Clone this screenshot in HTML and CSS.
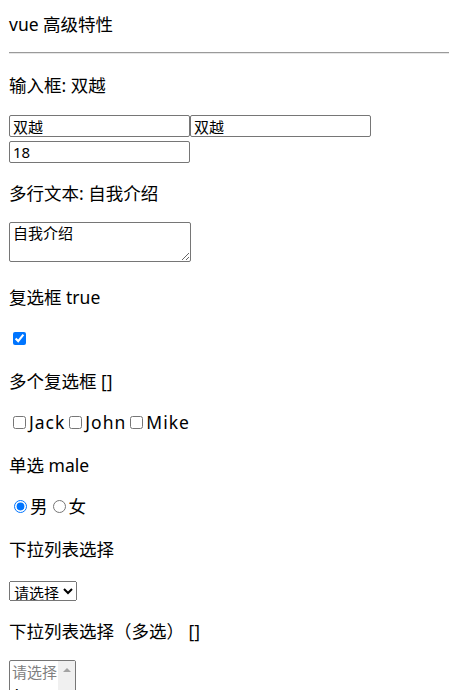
FILE: index.html
```html
<!DOCTYPE html>
<html lang="zh-CN">
<head>
<meta charset="utf-8">
<title>vue 高级特性</title>
<link rel="stylesheet" href="styles.css">
</head>
<body>
<div class="app">
  <p class="text title">vue 高级特性</p>
  <hr class="divider">
  <p class="text m20">输入框: 双越</p>
  <div class="inputs m19"><input class="text-input" type="text" value="双越"><input class="text-input" type="text" value="双越"><input class="text-input" type="text" value="18"></div>
  <p class="text m19">多行文本: 自我介绍</p>
  <textarea class="textarea m18">自我介绍</textarea>
  <p class="text m24">复选框 true</p>
  <input class="single-check m24" type="checkbox" checked>
  <p class="text m25">多个复选框 []</p>
  <div class="choice-row m19"><input class="check" type="checkbox" id="jack"><label class="latin" for="jack">Jack</label><input class="check" type="checkbox" id="john"><label class="latin" for="john">John</label><input class="check" type="checkbox" id="mike"><label class="latin" for="mike">Mike</label></div>
  <p class="text m21">单选 male</p>
  <div class="choice-row m19"><input class="radio" type="radio" name="g" id="male" checked><label for="male">男</label><input class="radio" type="radio" name="g" id="female"><label for="female">女</label></div>
  <p class="text m21">下拉列表选择</p>
  <select class="select m21"><option disabled selected value="">请选择</option><option>A</option><option>B</option><option>C</option></select>
  <p class="text m19">下拉列表选择（多选） []</p>
  <div class="multi-wrap m18">
    <select class="select-multi" multiple><option disabled value="">请选择</option><option>A</option><option>B</option><option>C</option></select>
    <div class="fake-scrollbar"><span class="arrow-up"></span></div>
  </div>
</div>
</body>
</html>
```

FILE: styles.css
```css
html, body {
  margin: 0;
  padding: 0;
  background: #fff;
}
body {
  font-family: "Noto Sans", "Noto Sans CJK SC", sans-serif;
  font-size: 17.5px;
  color: #000;
  overflow: hidden;
}
.app {
  padding: 13px 0 0 9px;
}
.text {
  margin: 0;
  height: 22px;
  line-height: 22px;
  white-space: nowrap;
}
.divider {
  display: block;
  margin: 17px 0 0 0;
  height: 0;
  border: 0;
  border-top: 1px solid #9a9a9a;
  border-bottom: 1px solid #e6e6e6;
}
.m18 { margin-top: 18px; }
.m19 { margin-top: 19px; }
.m20 { margin-top: 20px; }
.m21 { margin-top: 21px; }
.m24 { margin-top: 24px; }
.m25 { margin-top: 25px; }

.inputs {
  display: flex;
  flex-wrap: wrap;
  row-gap: 4px;
}
.text-input {
  box-sizing: border-box;
  width: 181px;
  height: 22px;
  margin: 0;
  padding: 0 3px;
  border: 1px solid #767676;
  border-radius: 2px;
  font-family: "Noto Sans", "Noto Sans CJK SC", sans-serif;
  font-size: 15px;
  color: #000;
  background: #fff;
}
.textarea {
  display: block;
  box-sizing: border-box;
  width: 182px;
  height: 40px;
  padding: 1px 3px;
  border: 1px solid #767676;
  border-radius: 2px;
  font-family: "Noto Sans", "Noto Sans CJK SC", sans-serif;
  font-size: 15px;
  line-height: 18px;
  color: #000;
  resize: both;
}
.single-check {
  display: block;
  width: 13px;
  height: 13px;
  margin-left: 4px;
  margin-bottom: 0;
}
.choice-row {
  display: flex;
  align-items: center;
  height: 22px;
  line-height: 22px;
}
.latin {
  letter-spacing: 1px;
}
.check {
  width: 13px;
  height: 13px;
  margin: 0 3px 0 4px;
}
.radio {
  width: 13px;
  height: 13px;
  margin: 0 3px 0 5px;
}
.select {
  display: block;
  box-sizing: border-box;
  height: 20px;
  width: 68px;
  font-family: "Noto Sans", "Noto Sans CJK SC", sans-serif;
  font-size: 15px;
  color: #000;
  padding: 0;
}
.multi-wrap {
  position: relative;
  width: 67px;
}
.select-multi {
  display: block;
  box-sizing: border-box;
  width: 67px;
  height: 84px;
  font-family: "Noto Sans", "Noto Sans CJK SC", sans-serif;
  font-size: 15px;
  color: #000;
  overflow: hidden;
}
.fake-scrollbar {
  position: absolute;
  top: 1px;
  right: 1px;
  width: 17px;
  height: 82px;
  background: #f0f0f0;
  display: flex;
  justify-content: center;
}
.arrow-up {
  margin-top: 7px;
  width: 0;
  height: 0;
  border-left: 4px solid transparent;
  border-right: 4px solid transparent;
  border-bottom: 4px solid #a3a3a3;
}
```
